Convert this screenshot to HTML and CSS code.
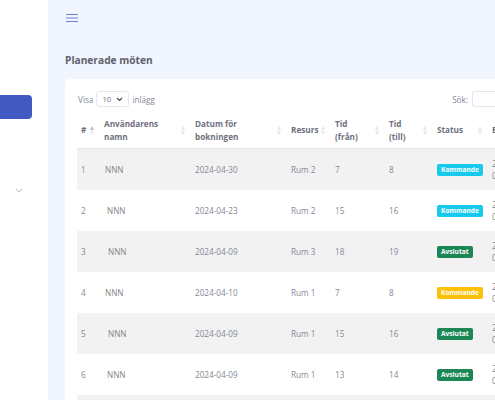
FILE: index.html
```html
<!DOCTYPE html>
<html lang="sv">
<head>
<meta charset="utf-8">
<title>Planerade möten</title>
<link rel="stylesheet" href="styles.css">
</head>
<body>
<div class="app">
  <aside class="sidebar">
    <div class="nav-active"></div>
    <svg class="nav-chevron" width="8" height="5" viewBox="0 0 8 5"><path d="M1 1l3 3 3-3" fill="none" stroke="#b8bcc6" stroke-width="1"/></svg>
  </aside>
  <main class="main">
    <div class="topbar">
      <svg class="burger" width="12" height="10" viewBox="0 0 12 10"><path d="M0 1.5h12M0 5h12M0 8.5h12" stroke="#6d80d8" stroke-width="1.2"/></svg>
    </div>
    <h1 class="title">Planerade möten</h1>
    <section class="card">
      <div class="controls">
        <div class="length">Visa
          <span class="select">10
            <svg width="7" height="5" viewBox="0 0 7 5"><path d="M1 1l2.5 2.5L6 1" fill="none" stroke="#444" stroke-width="1.1"/></svg>
          </span> inlägg</div>
        <div class="search">Sök: <span class="input"></span></div>
      </div>
      <table class="tbl">
        <colgroup>
          <col class="c1"><col class="c2"><col class="c3"><col class="c4"><col class="c5"><col class="c6"><col class="c7"><col class="c8">
        </colgroup>
        <thead>
          <tr>
            <th><div class="th"><span>#</span><i class="sort asc"></i></div></th>
            <th><div class="th"><span>Användarens<br>namn</span><i class="sort"></i></div></th>
            <th><div class="th"><span>Datum för<br>bokningen</span><i class="sort"></i></div></th>
            <th><div class="th"><span>Resurs</span><i class="sort"></i></div></th>
            <th><div class="th"><span>Tid<br>(från)</span><i class="sort"></i></div></th>
            <th><div class="th"><span>Tid<br>(till)</span><i class="sort"></i></div></th>
            <th><div class="th"><span>Status</span><i class="sort"></i></div></th>
            <th><div class="th"><span>Bokad</span><i class="sort"></i></div></th>
          </tr>
        </thead>
        <tbody>
          <tr><td>1</td><td class="name">NNN</td><td>2024-04-30</td><td>Rum 2</td><td>7</td><td>8</td><td><span class="badge info">Kommande</span></td><td class="two">2024-04-29<br>08:12</td></tr>
          <tr><td>2</td><td class="name n2">NNN</td><td>2024-04-23</td><td>Rum 2</td><td>15</td><td>16</td><td><span class="badge info">Kommande</span></td><td class="two">2024-04-22<br>09:40</td></tr>
          <tr><td>3</td><td class="name n3">NNN</td><td>2024-04-09</td><td>Rum 3</td><td>18</td><td>19</td><td><span class="badge done">Avslutat</span></td><td class="two">2024-04-08<br>07:55</td></tr>
          <tr><td>4</td><td class="name">NNN</td><td>2024-04-10</td><td>Rum 1</td><td>7</td><td>8</td><td><span class="badge warn">Kommande</span></td><td class="two">2024-04-09<br>06:30</td></tr>
          <tr><td>5</td><td class="name n3">NNN</td><td>2024-04-09</td><td>Rum 1</td><td>15</td><td>16</td><td><span class="badge done">Avslutat</span></td><td class="two">2024-04-08<br>05:21</td></tr>
          <tr><td>6</td><td class="name n2">NNN</td><td>2024-04-09</td><td>Rum 1</td><td>13</td><td>14</td><td><span class="badge done">Avslutat</span></td><td class="two">2024-04-08<br>04:10</td></tr>
          <tr><td>7</td><td class="name">NNN</td><td>2024-04-08</td><td>Rum 2</td><td>10</td><td>11</td><td><span class="badge done">Avslutat</span></td><td class="two">2024-04-07<br>03:02</td></tr>
        </tbody>
      </table>
    </section>
  </main>
</div>
</body>
</html>
```

FILE: styles.css
```css
html, body {
  margin: 0;
  padding: 0;
  height: 100%;
  overflow: hidden;
}
body {
  font-family: "Open Sans", "Noto Sans", sans-serif;
  color: #858796;
  background: #ffffff;
}
.app {
  display: flex;
  height: 400px;
  width: 495px;
  overflow: hidden;
}
.sidebar {
  width: 48px;
  flex: 0 0 48px;
  background: #ffffff;
  display: flex;
  flex-direction: column;
  align-items: flex-start;
}
.nav-active {
  margin-top: 95px;
  width: 32px;
  height: 24px;
  background: #4359c2;
  border-radius: 0 4px 4px 0;
}
.nav-chevron {
  margin-top: 69px;
  margin-left: 15px;
}
.main {
  flex: 1 0 auto;
  width: 447px;
  background: #f0f5fe;
  padding-left: 17px;
  box-sizing: border-box;
}
.topbar {
  height: 35px;
  display: flex;
  align-items: center;
}
.burger {
  margin-left: 1px;
}
.title {
  margin: 0;
  padding-top: 17px;
  height: 27px;
  font-size: 10.2px;
  font-weight: 700;
  color: #5f616d;
  line-height: 16px;
}
.card {
  width: 620px;
  background: #ffffff;
  border-radius: 5px 0 0 0;
  padding: 12px 0 0 12px;
  box-sizing: border-box;
  height: 330px;
}
.controls {
  display: flex;
  align-items: center;
  height: 16px;
  font-size: 8.2px;
  color: #858796;
  width: 435px;
  justify-content: space-between;
}
.length {
  display: flex;
  align-items: center;
  padding-left: 1px;
}
.select {
  display: inline-flex;
  align-items: center;
  gap: 5px;
  height: 16px;
  width: 33px;
  box-sizing: border-box;
  border: 1px solid #e3e6f0;
  border-radius: 3px;
  padding-left: 5px;
  margin: 0 3px 0 3px;
  color: #6e707e;
  font-size: 7.6px;
}
.search {
  display: flex;
  align-items: center;
  gap: 4px;
}
.input {
  display: inline-block;
  width: 40px;
  height: 16px;
  box-sizing: border-box;
  border: 1px solid #e3e6f0;
  border-right: none;
  border-radius: 3px 0 0 3px;
}
.tbl {
  margin-top: 6px;
  border-collapse: collapse;
  table-layout: fixed;
  width: 560px;
  font-size: 8.2px;
}
.c1 { width: 23px; }
.c2 { width: 91px; }
.c3 { width: 96px; }
.c4 { width: 44px; }
.c5 { width: 54px; }
.c6 { width: 48px; }
.c7 { width: 55px; }
.c8 { width: 149px; }
.tbl th {
  height: 35px;
  padding: 0 4px;
  text-align: left;
  font-weight: 700;
  color: #6e707e;
  line-height: 12.5px;
  border-bottom: 1px solid #e6e6e6;
  vertical-align: middle;
}
.th {
  display: flex;
  align-items: center;
  justify-content: space-between;
}
.sort {
  display: inline-block;
  width: 5px;
  height: 9px;
  margin-right: 1px;
  position: relative;
}
.sort::before, .sort::after {
  content: "";
  position: absolute;
  left: 0;
  border-left: 2.5px solid transparent;
  border-right: 2.5px solid transparent;
}
.sort::before {
  top: 0;
  border-bottom: 4px solid #e8e8ea;
}
.sort::after {
  bottom: 0;
  border-top: 4px solid #e8e8ea;
}
.sort.asc::before {
  border-bottom-color: #b9bbc4;
}
.tbl td {
  height: 41px;
  padding: 0 4px;
  color: #858796;
  vertical-align: middle;
  white-space: nowrap;
}
.tbl tbody tr:nth-child(odd) td {
  background: #f2f2f2;
}
.tbl td.name {
  padding-left: 5px;
  color: #858585;
}
.tbl td.name.n2 { padding-left: 7px; }
.tbl td.name.n3 { padding-left: 8px; }
.tbl td.two {
  line-height: 11.5px;
}
.badge {
  display: inline-block;
  font-size: 6.6px;
  font-weight: 700;
  color: #ffffff;
  padding: 0 4px;
  height: 12px;
  line-height: 12px;
  border-radius: 2px;
}
.badge.info { background: #17c9ec; }
.badge.done { background: #1a8754; }
.badge.warn { background: #ffc107; }
```
